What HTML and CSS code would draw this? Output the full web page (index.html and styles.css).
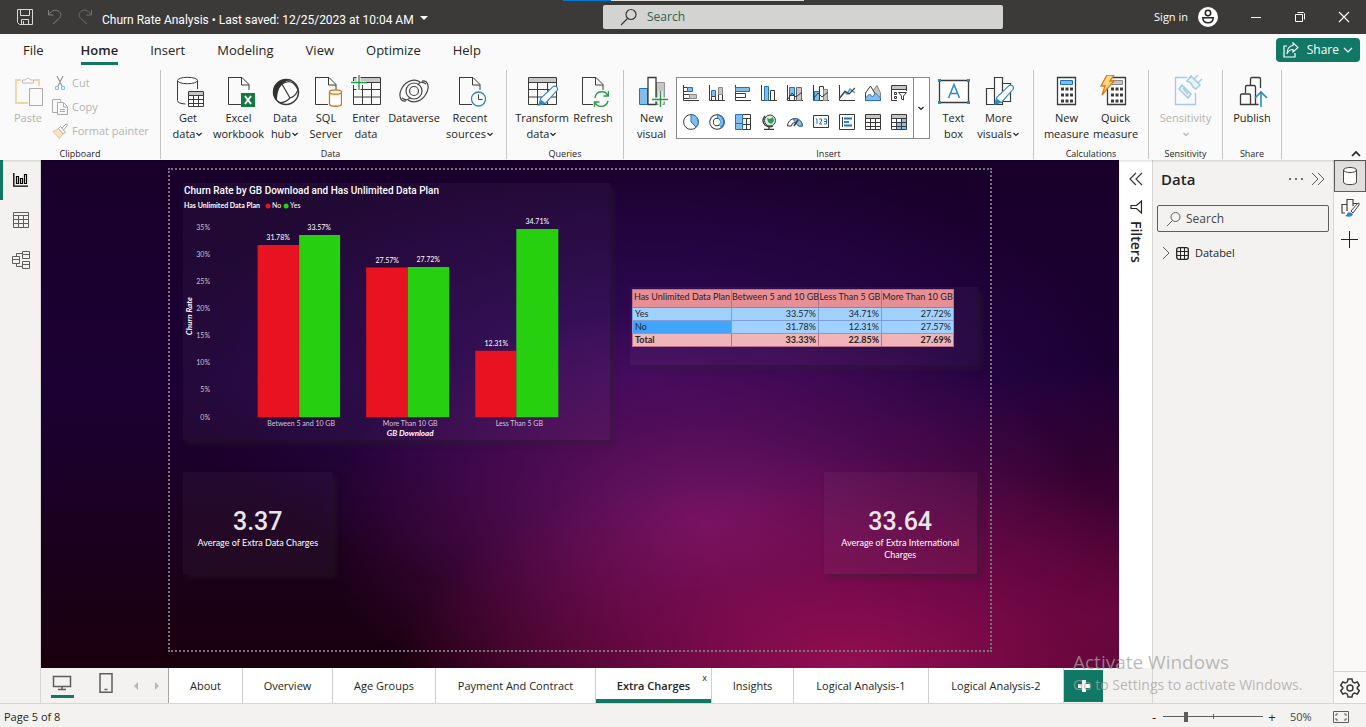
FILE: index.html
```html
<!DOCTYPE html>
<html lang="en">
<head>
<meta charset="utf-8">
<title>Churn Rate Analysis</title>
<link rel="stylesheet" href="styles.css">
</head>
<body>
<svg class="defs" aria-hidden="true">
  <symbol id="chev" viewBox="0 0 8 8"><path d="M1.500 3L4 5.500 6.500 3" fill="none" stroke="currentColor" stroke-width="1.200"/></symbol>
  <symbol id="doc" viewBox="0 0 32 32"><path d="M5.500 2.500H19l7 7V15M5.500 2v27.500H18M18.500 3v7H26" fill="none" stroke="#3b3a39"/></symbol>
  <symbol id="pencil" viewBox="0 0 24 24"><path d="M3 21l2-7L18 1.500q2-1 3.500.5t.5 3.500L10 19z" fill="#fff" stroke="#2b88c8" stroke-width="1.200"/><path d="M3 21l2-6 5 4z" fill="#2b88c8"/></symbol>
</svg>

<header class="titlebar">
  <span class="progress"></span>
  <div class="quick">
    <button class="tb" aria-label="Save"><svg width="16" height="16"><path d="M.5.500h15v15h-13l-2-2zM3.500.500v6h9v-6M4.500 15.500v-5h7v5M6.500 12v3" fill="none" stroke="#d8d8d8"/></svg></button>
    <button class="tb" aria-label="Undo"><svg width="16" height="16"><path d="M1.500 1v5h5M1.500 6C5 1 9 0 12 2.500s2 5.500-.5 7.500L6 15" fill="none" stroke="#83817f"/></svg></button>
    <button class="tb" aria-label="Redo"><svg width="16" height="16"><path d="M14.500 1v5h-5M14.500 6C11 1 7 0 4 2.500s-2 5.500.5 7.500L10 15" fill="none" stroke="#706e6c"/></svg></button>
    <button class="file">Churn Rate Analysis • Last saved: 12/25/2023 at 10:04 AM <svg width="10" height="10"><path d="M1 1h8L5 5z" fill="#fff"/></svg></button>
  </div>
  <label class="topsearch"><svg width="18" height="18"><circle cx="11" cy="6.500" r="5" fill="none" stroke="#3b3a39" stroke-width="1.200"/><path d="M7.500 10.500L1 17" stroke="#3b3a39" stroke-width="1.200"/></svg><input type="search" placeholder="Search" aria-label="Search"></label>
  <div class="account">
    <button class="signin">Sign in <svg width="20" height="20"><circle cx="10" cy="10" r="10" fill="#fff"/><circle cx="10" cy="6" r="2.700" fill="none" stroke="#222" stroke-width="1.500"/><path d="M4.800 10.800h10.400c0 3-2 5-5.200 5s-5.200-2-5.200-5z" fill="none" stroke="#222" stroke-width="1.500"/></svg></button>
    <button class="win" aria-label="Minimize"><svg width="12" height="12"><path d="M1 6.500h10" stroke="#fff"/></svg></button>
    <button class="win" aria-label="Restore"><svg width="12" height="12"><path d="M1.500 3.500h7v7h-7zM3.500 1.500h6l1 1v6" fill="none" stroke="#fff"/></svg></button>
    <button class="win" aria-label="Close"><svg width="12" height="12"><path d="M1 1l10 10M11 1L1 11" stroke="#fff" stroke-width="1.200"/></svg></button>
  </div>
</header>

<nav class="menu">
  <button class="first">File</button><button class="on">Home</button><button>Insert</button><button>Modeling</button><button>View</button><button>Optimize</button><button>Help</button>
  <button class="share"><svg width="16" height="16"><path d="M4 4H1v11h11v-4" fill="none" stroke="#fff" stroke-width="1.200"/><path d="M10 1l5 4.500-5 4.500V7.500C7 7.500 5 9 4 12c0-5 2-8 6-8.500z" fill="none" stroke="#fff" stroke-width="1.100"/></svg>Share<svg width="10" height="10"><path d="M1 3l4 4 4-4" fill="none" stroke="#fff" stroke-width="1.200"/></svg></button>
</nav>

<section class="ribbon">
  <div class="group g-clip">
    <div class="tools">
      <button class="big off w-paste"><svg width="32" height="32"><path d="M9 5H4v23h12M22 5h5v6" fill="none" stroke="#f3d3a3" stroke-width="1.800"/><path d="M10.500 8V5h3q2-4 5 0h3v3z" fill="#fff" stroke="#b8b8b8"/><path d="M17.500 13.500h13v17h-13z" fill="#fafafa" stroke="#aaa"/></svg><span>Paste</span></button>
      <div class="stack">
        <button class="row off"><svg width="16" height="16"><path d="M5 1l5 10M11 1L6 11" stroke="#999" fill="none" stroke-width="1.200"/><path d="M3.500 11.500h3v3h-3zM9.500 11.500h3v3h-3z" fill="#e6f2fa" stroke="#8fc0e0"/></svg>Cut</button>
        <button class="row off"><svg width="16" height="16"><path d="M5 13.500H.5V.500h8L9 4M5.500 3.500h6l4 4v8h-10zM11.500 4v4h4M8 10.500h5M8 12.500h5" fill="none" stroke="#aaa"/></svg>Copy</button>
        <button class="row off"><svg width="16" height="16"><path d="M1 8.500l6-3 4 5-3.500 5z" fill="#fbe3c6" stroke="#eec08c"/><path d="M6.500 5.500l2-2 5 6-2.500 1.500zM10 5l4-4q2 0 1 2l-3.500 4" fill="#fff" stroke="#aaa"/></svg>Format painter</button>
      </div>
    </div>
    <h2>Clipboard</h2>
  </div>

  <div class="group g-data">
    <div class="tools">
      <button class="big w48"><svg width="32" height="32"><path d="M5.500 5.500v20q0 3 8 3.500M25.500 5.500V14" fill="none" stroke="#3b3a39"/><ellipse cx="15.500" cy="5.500" rx="10" ry="3.200" fill="#fff" stroke="#3b3a39"/><path d="M16.500 16.500h15v15h-15z" fill="#fff" stroke="#3b3a39"/><path d="M17 17h14v3H17z" fill="#c8c6c4"/><path d="M16.500 20.500h15M16.500 24.500h15M16.500 28.500h15M21.500 20v12M26.500 20v12" stroke="#3b3a39"/></svg><span>Get<br>data<svg class="cv"><use href="#chev"/></svg></span></button>
      <button class="big w53"><svg width="32" height="32"><use href="#doc" width="32" height="32"/><path d="M18 18h14v14H18z" fill="#107c41"/><path d="M22 21l6 8M28 21l-6 8" stroke="#fff" stroke-width="2"/></svg><span>Excel<br>workbook</span></button>
      <button class="big w40"><svg width="32" height="32"><circle cx="17" cy="17" r="12.500" fill="#fff" stroke="#3b3a39" stroke-width="1.500"/><path d="M8 26C2 20 4 9 11 6q6-3 12-1-6 0-9 4c-4 3-6 8-6 17z" fill="#323130"/><path d="M13 9l8 14q5-1 8-8M9 27q6 2 12-4M13 9q10-7 16 6" fill="none" stroke="#3b3a39" stroke-width="1.200"/></svg><span>Data<br>hub<svg class="cv"><use href="#chev"/></svg></span></button>
      <button class="big w42"><svg width="32" height="32"><use href="#doc" width="32" height="32"/><path d="M19.500 17v12c0 3 12 3 12 0V17" fill="#fff" stroke="#d8700c" stroke-width="1.300"/><ellipse cx="25.500" cy="17" rx="6" ry="2.200" fill="#fff" stroke="#d8700c" stroke-width="1.300"/></svg><span>SQL<br>Server</span></button>
      <button class="big w38"><svg width="32" height="32"><path d="M4 3h26v4H4z" fill="#c8c6c4"/><path d="M3.500 2.500h27v27h-27zM3.500 7.500h27M3.500 14.500h27M3.500 22h27M12.500 7v22M21.500 7v22" fill="none" stroke="#3b3a39"/><path d="M1 8h15M8.500 0v16" stroke="#fafafa" stroke-width="4"/><path d="M1 7.500h16M9 0v15" stroke="#1f9a45" stroke-width="1.300"/></svg><span>Enter<br>data</span></button>
      <button class="big w58"><svg width="32" height="32"><g fill="none" stroke="#444" stroke-width="1.200"><circle cx="16" cy="16" r="4.500"/><circle cx="16" cy="16" r="8"/><path d="M8 26C2 27 0 20 4 13 8 6 16 3 22 7M24 6c6-1 8 6 4 13-4 7-12 10-18 6M4 23q6 4 8-1M28 9q-6-4-8 1"/></g></svg><span>Dataverse</span></button>
      <button class="big w54"><svg width="32" height="32"><use href="#doc" width="32" height="32"/><circle cx="24.500" cy="24" r="7" fill="#fff" stroke="#2b88c8" stroke-width="1.300"/><path d="M24.500 19.500V24.500h4" fill="none" stroke="#3b3a39"/></svg><span>Recent<br>sources<svg class="cv"><use href="#chev"/></svg></span></button>
    </div>
    <h2>Data</h2>
  </div>

  <div class="group g-query">
    <div class="tools">
      <button class="big w56"><svg width="32" height="32"><path d="M3 3h27v4H3z" fill="#c8c6c4"/><path d="M2.500 2.500h28v27h-28zM2.500 7.500h28M2.500 14.500h28M2.500 22h28M11.500 7v22M21.500 7v22" fill="none" stroke="#3b3a39"/><use href="#pencil" x="10" y="10" width="23" height="23"/></svg><span>Transform<br>data<svg class="cv"><use href="#chev"/></svg></span></button>
      <button class="big w46"><svg width="32" height="32"><use href="#doc" width="32" height="32"/><path d="M16 17h16v15H16z" fill="#fafafa"/><g fill="none" stroke="#2f9a4c" stroke-width="1.400"><path d="M18 23c1-8 11-8 13-2M31.500 16v5h-5M31 26c-2 7-11 7-13 1M17.500 32v-5h5"/></g></svg><span>Refresh</span></button>
    </div>
    <h2>Queries</h2>
  </div>

  <div class="group g-insert">
    <div class="tools">
      <button class="big w48"><svg width="32" height="32"><path d="M3.500 13.500h8v16h-8z" fill="#83bdec" stroke="#2272b9"/><path d="M20.500 7.500h8v22h-8z" fill="#c8c6c4" stroke="#979593"/><path d="M12 2.500h8v27h-8z" fill="#fff" stroke="#3b3a39" stroke-width="1.300"/><path d="M16 24.500h16M24.500 16v16" stroke="#fafafa" stroke-width="4"/><path d="M16 24.500h16M24.500 16v16" stroke="#1f9a45" stroke-width="1.400"/></svg><span>New<br>visual</span></button>
      <div class="gallery">
        <div class="cells">
          <button aria-label="Stacked bar chart"><svg width="16" height="16"><path d="M.5 0v15.500H16" fill="none" stroke="#3b3a39"/><path d="M.5 2.500h4v4h-4z" fill="#fff" stroke="#3b3a39"/><path d="M4.500 2.500h5v4h-5z" fill="#83bdec" stroke="#2272b9"/><path d="M.5 9.500h6v4h-6z" fill="#fff" stroke="#3b3a39"/><path d="M6.500 9.500h7v4h-7z" fill="#c8c6c4" stroke="#8a8886"/></svg></button>
          <button aria-label="Stacked column chart"><svg width="16" height="16"><path d="M.5 0v15.500H16" fill="none" stroke="#3b3a39"/><path d="M2.500 5.500h4v6h-4z" fill="#83bdec" stroke="#2272b9"/><path d="M2.500 11.500h4v4h-4zM9.500 9.500h4v6h-4z" fill="#fff" stroke="#3b3a39"/><path d="M9.500 2.500h4v7h-4z" fill="#c8c6c4" stroke="#8a8886"/></svg></button>
          <button aria-label="Clustered bar chart"><svg width="16" height="16"><path d="M.5 0v15.500H16" fill="none" stroke="#3b3a39"/><path d="M.5 2.500h14v4H.5z" fill="#83bdec" stroke="#2272b9"/><path d="M.5 8.500h10v4H.5z" fill="#fff" stroke="#3b3a39"/></svg></button>
          <button aria-label="Clustered column chart"><svg width="16" height="16"><path d="M.5 0v15.500H16" fill="none" stroke="#3b3a39"/><path d="M3.500 1.500h4v14h-4z" fill="#83bdec" stroke="#2272b9"/><path d="M9.500 5.500h4v10h-4z" fill="#fff" stroke="#3b3a39"/></svg></button>
          <button aria-label="Line and stacked column chart"><svg width="16" height="16"><path d="M.5 0v15.500H16" fill="none" stroke="#3b3a39"/><path d="M2.500 2.500h5v8h-5z" fill="#83bdec" stroke="#2272b9"/><path d="M9.500 2.500h5v13h-5z" fill="#c8c6c4" stroke="#666"/><path d="M2.500 10.500h5v5h-5zM1 14l4-6 4 4 6-5" fill="none" stroke="#3b3a39"/></svg></button>
          <button aria-label="Line and clustered column chart"><svg width="16" height="16"><path d="M.5 0v15.500H16" fill="none" stroke="#3b3a39"/><path d="M1.500 6.500h5v9h-5z" fill="#83bdec" stroke="#2272b9"/><path d="M6.500 1.500h4v14h-4z" fill="#fff" stroke="#3b3a39"/><path d="M10.500 4.500h4v11h-4z" fill="#c8c6c4" stroke="#8a8886"/><path d="M1 13l4-5 4 4 6-5" fill="none" stroke="#3b3a39"/></svg></button>
          <button aria-label="Line chart"><svg width="16" height="16"><path d="M.5 0v15.500H16" fill="none" stroke="#3b3a39"/><path d="M1 12l5-5 2 2 3-5 5 4" fill="none" stroke="#4a9cdf" stroke-width="1.500"/><path d="M1 13l5-7 4 3 6-6" fill="none" stroke="#3b3a39" stroke-width="1.200"/></svg></button>
          <button aria-label="Area chart"><svg width="16" height="16"><path d="M8 15V6l4-5.500L15.500 8v7.500z" fill="#c8c6c4" stroke="#8a8886"/><path d="M.5 15.500V8l5-7 6 10v4.500z" fill="#fff" stroke="#3b3a39"/><path d="M.5 15.500V13l4-4 3 3 3-4 5 5v2.500z" fill="#83bdec" stroke="#2272b9"/></svg></button>
          <button aria-label="Slicer"><svg width="16" height="16"><path d="M1 1h14v3H1z" fill="#c8c6c4"/><path d="M6 15.500H.5V.500h15V6M.5 4.500h15M3.500 7.500h2v2h-2zM3.500 11.500h2v2h-2zM7.500 7.500h8l-3 3.500v4l-2-1v-3z" fill="none" stroke="#3b3a39"/></svg></button>
          <button aria-label="Pie chart"><svg width="16" height="16"><circle cx="8" cy="8" r="7.400" fill="#fff" stroke="#3b3a39"/><path d="M8 8V.600a7.400 7.400 0 0 1 5.200 12.600z" fill="#83bdec" stroke="#2272b9"/></svg></button>
          <button aria-label="Donut chart"><svg width="16" height="16"><circle cx="8" cy="8" r="5.500" fill="none" stroke="#3b3a39" stroke-width="4.500"/><circle cx="8" cy="8" r="5.500" fill="none" stroke="#fff" stroke-width="2.600"/><path d="M8 2.500a5.500 5.500 0 0 1 3 10" fill="none" stroke="#2272b9" stroke-width="4.500"/><path d="M8.500 2.500a5.500 5.500 0 0 1 2.500 9.500" fill="none" stroke="#83bdec" stroke-width="2.600"/></svg></button>
          <button aria-label="Treemap"><svg width="16" height="16"><path d="M7.500.500h8v15h-8zM7.500 4.500h8M7.500 10.500h8M11.500 4.500v11" fill="#fff" stroke="#3b3a39"/><path d="M.5.500h7v15h-7zM.5 9.500h7" fill="#83bdec" stroke="#2272b9"/></svg></button>
          <button aria-label="Map"><svg width="16" height="16"><circle cx="9" cy="6.500" r="5.500" fill="#d5f0dc" stroke="#3b3a39"/><path d="M6 4l3 1 3-2 1 4-3 3-3-2z" fill="#2f9a4c"/><path d="M4 2q-4 5 0 9 4 3 8 1M8 13v2M3 15.500h10" fill="none" stroke="#3b3a39" stroke-width="1.300"/></svg></button>
          <button aria-label="Gauge"><svg width="16" height="16"><path d="M.5 12a7.500 7.500 0 0 1 15 0h-4a3.500 3.500 0 0 0-7 0z" fill="#fff" stroke="#3b3a39"/><path d="M6 5a7.500 7.500 0 0 1 9.500 7h-4l-3-3.500z" fill="#83bdec" stroke="#2272b9"/><path d="M7 12l4-6" stroke="#3b3a39" stroke-width="1.500"/></svg></button>
          <button aria-label="Card"><svg width="16" height="16"><path d="M.5 1.500h15v12H.5z" fill="#fff" stroke="#3b3a39"/><path d="M3 5h1v5M6 5h2.500v2L6.500 10H9M11 5h2.500v5H11M11 7.500h2" fill="none" stroke="#2272b9"/></svg></button>
          <button aria-label="Multi-row card"><svg width="16" height="16"><path d="M.5.500h15v15H.5zM3.500 3v10" fill="#fff" stroke="#3b3a39"/><path d="M5 4.500h8M5 11.500h8" stroke="#2272b9" stroke-width="2"/><path d="M5 8h5" stroke="#2b88c8" stroke-width="2"/></svg></button>
          <button aria-label="Table"><svg width="16" height="16"><path d="M1 1h14v3H1z" fill="#c8c6c4"/><path d="M.5.500h15v15H.5zM.5 4.500h15M.5 8.500h15M.5 12.500h15M5.500 4v12M10.500 4v12" fill="none" stroke="#3b3a39"/></svg></button>
          <button aria-label="Matrix"><svg width="16" height="16"><path d="M1 1h14v3H1z" fill="#c8c6c4"/><path d="M5.500 8.500h10v7h-10zM10.500 4.500h5v4h-5z" fill="#83bdec"/><path d="M.5.500h15v15H.5zM.5 4.500h15M.5 8.500h15M.5 12.500h15M5.500 4v12M10.500 4v12" fill="none" stroke="#3b3a39"/></svg></button>
        </div>
        <button class="more" aria-label="More visuals"><svg class="cv"><use href="#chev"/></svg></button>
      </div>
      <button class="big w48"><svg width="32" height="32"><path d="M1.500 5.500h29v22h-29z" fill="#fff" stroke="#3b3a39" stroke-width="1.300"/><path d="M0 4h3v3H0zM29 4h3v3h-3zM0 26h3v3H0zM29 26h3v3h-3z" fill="#2b88c8"/><path d="M10.500 23L16 9.500 21.500 23M12.500 18.500h7" fill="none" stroke="#2b88c8" stroke-width="1.500"/></svg><span>Text<br>box</span></button>
      <button class="big w42"><svg width="32" height="32"><path d="M3.500 13.500h8v16h-8zM11.500 2.500h8v27h-8zM19.500 8.500h8v18h-8z" fill="#fff" stroke="#3b3a39" stroke-width="1.200"/><use href="#pencil" x="9" y="9" width="23" height="23"/></svg><span>More<br>visuals<svg class="cv"><use href="#chev"/></svg></span></button>
    </div>
    <h2>Insert</h2>
  </div>

  <div class="group g-calc">
    <div class="tools">
      <button class="big w49"><svg width="32" height="32"><path d="M6.500 2.500h18v27h-18z" fill="#fff" stroke="#3b3a39" stroke-width="1.300"/><path d="M9.500 5.500h12v4h-12z" fill="#83bdec" stroke="#2272b9"/><path d="M10 14h12M10 20h12M10 26h12" stroke="#3b3a39" stroke-width="3" stroke-dasharray="3 1.500"/></svg><span>New<br>measure</span></button>
      <button class="big w49"><svg width="32" height="32"><path d="M7.500 2.500h18v27h-18z" fill="#fff" stroke="#3b3a39" stroke-width="1.300"/><path d="M11.500 5.500h11v4h-11z" fill="#c8c6c4" stroke="#8a8886"/><path d="M11 14h12M11 20h12M11 26h12" stroke="#3b3a39" stroke-width="3" stroke-dasharray="3 1.500"/><path d="M7 0h7l-4 6h4L2 20l3-9H1z" fill="#fcd58a" stroke="#df7a12" stroke-width="1.300"/></svg><span>Quick<br>measure</span></button>
    </div>
    <h2>Calculations</h2>
  </div>

  <div class="group g-sens">
    <div class="tools">
      <button class="big off w58"><svg width="32" height="32"><path d="M17 2.500H5.500v27h20V18" fill="none" stroke="#a3cbe5" stroke-width="1.300"/><path d="M12 10l9 9-3 4-9-9zM13 13l5 6M17 6l4-5 9 9-4 4q-3-1-4-4t-5-4zM24 4l4-4M28 8l4-4" fill="#eaf4fa" stroke="#a3cbe5" stroke-width="1.500"/></svg><span>Sensitivity<br><svg class="cv"><use href="#chev"/></svg></span></button>
    </div>
    <h2>Sensitivity</h2>
  </div>

  <div class="group g-share">
    <div class="tools">
      <button class="big w46"><svg width="32" height="32"><path d="M14.500 10V4q0-1.500 1.500-1.500h7q1.500 0 1.500 1.500v9M9.500 18v-6q0-1.500 1.500-1.500h7q1.500 0 1.500 1.500v17.500M4.500 29.500v-9q0-1.500 1.500-1.500h7q1.500 0 1.500 1.500v9zM14.500 29.500h8" fill="none" stroke="#3b3a39" stroke-width="1.300"/><path d="M25 32V17M19 23l6-6 6 6" fill="none" stroke="#2b88c8" stroke-width="1.600"/></svg><span>Publish</span></button>
    </div>
    <h2>Share</h2>
  </div>
  <button class="collapse" aria-label="Collapse ribbon"><svg width="10" height="10"><path d="M1 7l4-4 4 4" fill="none" stroke="#222" stroke-width="1.700"/></svg></button>
</section>

<main class="main">
  <nav class="views">
    <button class="on" aria-label="Report view"><svg width="16" height="16"><path d="M.8 1v13.200H15" fill="none" stroke="#000" stroke-width="1.300"/><path d="M3.500 4.500h2v7h-2zM7.500 6.500h2v5h-2zM11.500 2.500h2v9h-2z" fill="none" stroke="#000" stroke-width="1.200"/></svg></button>
    <button aria-label="Table view"><svg width="16" height="16"><path d="M.5.500h15v15H.5zM.5 3.500h15M.5 7.500h15M.5 11.500h15M5.500 3v12M10.500 3v12" fill="none" stroke="#605e5c"/></svg></button>
    <button aria-label="Model view"><svg width="18" height="18"><path d="M.5 5.500h7v7h-7zM.5 8.500h7M10.500.500h7v7h-7zM10.500 3.500h7M10.500 10.500h7v7h-7zM10.500 13.500h7M4.500 5.500v-3h6M4.500 12.500v3h6" fill="none" stroke="#605e5c"/></svg></button>
  </nav>

  <div class="work">
    <div class="desk">
      <div class="canvas">
        <div class="page">
          <article class="visual v-chart">
            <svg viewBox="0 0 426 257" role="img" aria-label="Churn Rate by GB Download and Has Unlimited Data Plan">
              <text class="c-title" x="1" y="11">Churn Rate by GB Download and Has Unlimited Data Plan</text>
              <text class="c-leg" x="1" y="25">Has Unlimited Data Plan</text>
              <circle cx="85" cy="23" r="2.500" fill="#e81220"/><text class="c-sm" x="89" y="25">No</text>
              <circle cx="103" cy="23" r="2.500" fill="#26d00e"/><text class="c-sm" x="107" y="25">Yes</text>
              <g class="c-tick"><text x="27" y="47">35%</text><text x="27" y="74">30%</text><text x="27" y="101">25%</text><text x="27" y="128">20%</text><text x="27" y="155">15%</text><text x="27" y="182">10%</text><text x="27" y="209">5%</text><text x="27" y="237">0%</text></g>
              <text class="c-axis" transform="translate(9 133) rotate(-90)">Churn Rate</text>
              <g fill="#e81220"><path d="M74.500 62H116v172H74.500zM183 84.500h41.500V234H183zM292 167.500h41V234h-41z"/></g>
              <g fill="#26d00e"><path d="M116 52h41v182h-41zM224.500 84h41.500v150h-41.500zM333 46h42v188h-42z"/></g>
              <g class="c-val"><text x="95" y="57">31.78%</text><text x="136" y="47">33.57%</text><text x="204" y="80">27.57%</text><text x="245" y="79">27.72%</text><text x="313" y="163">12.31%</text><text x="354" y="41">34.71%</text></g>
              <g class="c-cat"><text x="118" y="243">Between 5 and 10 GB</text><text x="227" y="243">More Than 10 GB</text><text x="336" y="243">Less Than 5 GB</text></g>
              <text class="c-axis" x="227" y="253">GB Download</text>
            </svg>
          </article>
          <article class="visual v-table">
            <table>
              <thead><tr><th>Has Unlimited Data Plan</th><th>Between 5 and 10 GB</th><th>Less Than 5 GB</th><th>More Than 10 GB</th></tr></thead>
              <tbody><tr><td>Yes</td><td>33.57%</td><td>34.71%</td><td>27.72%</td></tr><tr class="alt"><td>No</td><td>31.78%</td><td>12.31%</td><td>27.57%</td></tr></tbody>
              <tfoot><tr><td>Total</td><td>33.33%</td><td>22.85%</td><td>27.69%</td></tr></tfoot>
            </table>
          </article>
          <article class="visual kpi k-data"><strong>3.37</strong><span>Average of Extra Data Charges</span></article>
          <article class="visual kpi k-intl"><strong>33.64</strong><span>Average of Extra International Charges</span></article>
        </div>
      </div>
      <aside class="filters">
        <button aria-label="Expand filters"><svg width="14" height="14"><path d="M7 1L1 7l6 6M13 1L7 7l6 6" fill="none" stroke="#3b3a39" stroke-width="1.200"/></svg></button>
        <svg width="14" height="14"><path d="M12.500 1v12L7.500 8.500 2 8.500V5.500h5.500z" fill="none" stroke="#252423" stroke-width="1.200"/></svg>
        <span>Filters</span>
      </aside>
    </div>
    <div class="pages">
      <div class="layouts">
        <button class="on" aria-label="Desktop layout"><svg width="20" height="16"><path d="M1.500 1.500h17v10h-17zM6 14.500h8M10 12v2" fill="none" stroke="#605e5c" stroke-width="1.500"/></svg></button>
        <button aria-label="Mobile layout"><svg width="14" height="20"><path d="M1 .800h12v18.400H1zM5.500 16.500h3" fill="none" stroke="#605e5c" stroke-width="1.500"/></svg></button>
        <button class="step-page" aria-label="Previous pages"><svg width="6" height="8"><path d="M5 0v8L1 4z" fill="#b8b6b4"/></svg></button>
        <button class="step-page" aria-label="Next pages"><svg width="6" height="8"><path d="M1 0v8l4-4z" fill="#b8b6b4"/></svg></button>
      </div>
      <div class="tabs">
        <button>About</button><button>Overview</button><button>Age Groups</button><button>Payment And Contract</button><button class="on">Extra Charges<i>x</i></button><button>Insights</button><button>Logical Analysis-1</button><button>Logical Analysis-2</button>
        <button class="add" aria-label="New page"><svg width="12" height="12"><path d="M6 0v12M0 6h12" stroke="#fff" stroke-width="4"/></svg></button>
      </div>
    </div>
  </div>

  <aside class="data">
    <header><h1>Data</h1><button aria-label="More options"><svg width="16" height="4"><circle cx="2" cy="2" r="1" fill="#444"/><circle cx="8" cy="2" r="1" fill="#444"/><circle cx="14" cy="2" r="1" fill="#444"/></svg></button><button aria-label="Collapse"><svg width="14" height="14"><path d="M1 1l6 6-6 6M7 1l6 6-6 6" fill="none" stroke="#605e5c"/></svg></button></header>
    <label><svg width="16" height="16"><circle cx="9.500" cy="6" r="4.500" fill="none" stroke="#605e5c"/><path d="M6.500 9.500L1 15" stroke="#605e5c"/></svg><input type="search" placeholder="Search" aria-label="Search fields"></label>
    <button class="node"><svg width="8" height="14"><path d="M1 1l6 6-6 6" fill="none" stroke="#605e5c"/></svg><svg width="13" height="13"><rect x=".7" y=".7" width="11.600" height="11.600" rx="2" fill="none" stroke="#252423" stroke-width="1.300"/><path d="M4.500 1v11M8.500 1v11M1 4.500h11M1 8.500h11" stroke="#252423"/></svg>Databel</button>
  </aside>

  <nav class="rail">
    <button class="on" aria-label="Data"><svg width="16" height="20"><path d="M1.500 4v12c0 3.500 13 3.500 13 0V4" fill="#fff" stroke="#444"/><ellipse cx="8" cy="4" rx="6.500" ry="2.500" fill="#fff" stroke="#444"/></svg></button>
    <button aria-label="Format"><svg width="20" height="20"><path d="M5 15H2V6.500h5V13M7 6.500v-5h6V8M13 5.500h4" fill="none" stroke="#444" stroke-width="1.200"/><path d="M18 5q2 0 1 2l-6 8-2-2z" fill="#fff" stroke="#444"/><path d="M5 18q2-1 2.500-3 2.500-2 5.500 1-1 4-8 2z" fill="#2b88c8"/></svg></button>
    <button aria-label="Add"><svg width="18" height="18"><path d="M8.500 0v17M0 8.500h17" stroke="#222"/></svg></button>
    <button class="gear" aria-label="Settings"><svg width="20" height="20"><path d="M8 1h4l.6 2.800 2 1.100L17.300 4l2 3.400-2 2v1.200l2 2-2 3.400-2.700-.9-2 1.100L12 19H8l-.6-2.800-2-1.100-2.700.9-2-3.400 2-2V9.400l-2-2 2-3.400 2.700.9 2-1.100z" fill="none" stroke="#3b3a39" stroke-width="1.500"/><circle cx="10" cy="10" r="3" fill="none" stroke="#3b3a39" stroke-width="1.500"/></svg></button>
  </nav>
</main>

<footer class="status">
  <span>Page 5 of 8</span>
  <button class="step" aria-label="Zoom out">-</button>
  <input type="range" min="0" max="100" value="22" aria-label="Zoom">
  <button class="step" aria-label="Zoom in">+</button>
  <span class="pct">50%</span>
  <button class="fit" aria-label="Fit to page"><svg width="16" height="12"><path d="M.5.500h15v11H.5z" fill="none" stroke="#605e5c"/><path d="M3 5V3h2M11 3h2v2M3 7v2h2M11 9h2V7" fill="none" stroke="#605e5c"/></svg></button>
</footer>

<div class="watermark"><p>Activate Windows</p><span>Go to Settings to activate Windows.</span></div>
</body>
</html>
```

FILE: styles.css
```css
* { box-sizing: border-box; }
body {
  margin: 0;
  height: 100vh;
  display: flex;
  flex-direction: column;
  overflow: hidden;
  font: 11px/16px "Open Sans", "Noto Sans", sans-serif;
  color: #252423;
  background: #f3f2f1;
}
button {
  border: 0;
  padding: 0;
  background: none;
  font: inherit;
  color: inherit;
  white-space: nowrap;
}
input { font: inherit; color: inherit; border: 0; outline: 0; background: none; padding: 0; min-width: 0; }
h1, h2, p { margin: 0; font-weight: 400; }
svg { display: block; flex: none; }
.defs { position: absolute; width: 0; height: 0; }
.cv { display: inline-block; width: 8px; height: 8px; }

/* Title bar */
.titlebar {
  position: relative;
  display: grid;
  grid-template-columns: 603fr 400px 363fr;
  align-items: center;
  height: 34px;
  background: #3b3a39;
  color: #fff;
}
.progress {
  position: absolute;
  top: 0;
  left: 563px;
  width: 241px;
  height: 1px;
  background: linear-gradient(90deg, #0078d4 20%, #e1dfdd 20%);
}
.quick { display: flex; align-items: center; padding-left: 17px; gap: 14px; }
.file { display: flex; align-items: center; gap: 5px; height: 34px; margin-left: -5px; padding-top: 6px; font: 12px/16px Roboto, sans-serif; }
.topsearch {
  display: flex;
  align-items: center;
  gap: 9px;
  height: 24px;
  padding-left: 17px;
  border-radius: 2px;
  background: #d3d3d1;
}
.topsearch input { flex: 1; font-size: 12px; }
.topsearch input::placeholder { color: #2f5f55; opacity: 1; }
.account { display: flex; align-items: center; justify-content: flex-end; gap: 32px; padding-right: 16px; }
.signin { display: flex; align-items: center; gap: 10px; }

/* Menu */
.menu {
  display: flex;
  align-items: center;
  gap: 32px;
  height: 32px;
  padding: 0 6px 0 23px;
  background: #fafafa;
  font-size: 13px;
}
.menu button { height: 32px; }
.menu .first { margin-right: 5px; }
.menu .on { font-weight: 600; box-shadow: inset 0 -1px #fafafa, inset 0 -4px #117865; }
.menu .share {
  display: flex;
  align-items: center;
  gap: 8px;
  height: 24px;
  margin-left: auto;
  padding: 0 7px;
  border-radius: 4px;
  background: #117865;
  color: #fff;
  font-size: 12px;
}
.share svg:last-child { margin-left: -4px; }

/* Ribbon */
.ribbon {
  position: relative;
  z-index: 1;
  display: flex;
  height: 94px;
  padding: 4px 0 1px;
  background: #fafafa;
  box-shadow: 0 1px 2px rgba(0, 0, 0, .15);
}
.group {
  display: flex;
  flex-direction: column;
  justify-content: space-between;
  border-right: 1px solid #c8c6c4;
  flex: none;
}
.group h2 { font-size: 9px; line-height: 10px; text-align: center; }
.tools { display: flex; justify-content: center; }
.g-clip { width: 161px; }
.g-clip .tools { justify-content: flex-start; padding-left: 5px; }
.g-data { width: 346px; padding-right: 6px; }
.g-query { width: 117px; }
.g-insert { width: 410px; }
.g-insert .tools { padding-right: 10px; }
.g-calc { width: 115px; }
.g-sens { width: 74px; }
.g-share { width: 59px; }
.big {
  display: flex;
  flex-direction: column;
  align-items: center;
  justify-content: flex-start;
  gap: 3px;
  padding-top: 5px;
}
.big span { text-align: center; }
.off { color: #b5b3b1; }
.w-paste { width: 46px; }
.w38 { width: 38px; }
.w40 { width: 40px; }
.w42 { width: 42px; }
.w46 { width: 46px; }
.w48 { width: 48px; }
.w49 { width: 49px; }
.w53 { width: 53px; }
.w54 { width: 54px; }
.w56 { width: 56px; }
.w58 { width: 58px; }
.w38, .w40, .w42, .w46, .w48, .w49, .w53, .w54, .w56, .w58 { flex: none; }
.stack { display: flex; flex-direction: column; gap: 8px; padding: 5px 0 0 1px; }
.row { display: flex; align-items: center; gap: 4px; }
.gallery {
  display: flex;
  height: 62px;
  margin-top: 7px;
  border: 1px solid #8a8886;
  background: #fff;
}
.cells {
  display: grid;
  grid-template-columns: repeat(9, 26px);
  grid-template-rows: 29px 29px;
  align-content: start;
  width: 236px;
  padding-left: 1px;
}
.cells button, .more { display: flex; align-items: center; justify-content: center; }
.more { width: 16px; border-left: 1px solid #8a8886; }
.collapse { margin: auto 5px 0 auto; }

/* Main area */
.main { flex: 1; display: flex; min-height: 0; }
.views { width: 41px; border-right: 1px solid #d8d6d4; display: flex; flex-direction: column; }
.views button { display: flex; align-items: center; justify-content: center; height: 40px; padding-left: 2px; }
.views .on { box-shadow: inset 3px 0 #117865; }
.work { flex: 1; display: flex; flex-direction: column; min-width: 0; }
.desk { flex: 1; display: flex; min-height: 0; }
.canvas {
  flex: 1;
  display: flex;
  padding: 8px 127px 16px;
  background:
    radial-gradient(ellipse 42% 42% at 75% 100%, rgba(152, 14, 84, .95), rgba(140, 10, 80, .5) 50%, transparent),
    radial-gradient(ellipse 36% 44% at 62% 72%, rgba(122, 24, 108, .9), rgba(110, 15, 95, .45) 55%, transparent),
    radial-gradient(ellipse 42% 50% at 100% 90%, rgba(110, 5, 70, .7), transparent),
    radial-gradient(ellipse 44% 45% at 56% 42%, rgba(62, 14, 110, .7), transparent),
    linear-gradient(180deg, #18002a, #1c0034 45%, #1a000c);
}
.page { position: relative; flex: 1; border: 2px dotted #77727a; }
.visual {
  position: absolute;
  background: rgba(255, 255, 255, .035);
  box-shadow: 4px 4px 5px rgba(40, 35, 40, .4);
  color: #fff;
  font-family: Lato, sans-serif;
}
.v-chart { left: 1.6%; top: 2.7%; width: 52%; height: 53.6%; }
.v-chart svg { width: 100%; height: 100%; }
.v-table { left: 56.1%; top: 24.4%; width: 42.4%; height: 16.3%; padding: 2px; }
.kpi {
  top: 63%;
  height: 21.1%;
  padding: 35px 12px 0;
  display: flex;
  flex-direction: column;
  align-items: center;
  justify-content: flex-start;
  text-align: center;
  font-size: 9px;
  line-height: 12px;
}
.k-data { left: 1.6%; width: 18.2%; }
.k-intl { left: 79.7%; width: 18.7%; }
.kpi strong { font-family: Roboto, sans-serif; font-weight: 500; font-size: 25px; line-height: 30px; color: #e8e6e8; }

text { fill: #fff; font-size: 7px; }
.c-title { font-family: Roboto, sans-serif; font-size: 10px; font-weight: 500; }
.c-leg { font-weight: 700; }
.c-tick { text-anchor: end; }
.c-tick text { fill: #c8c2d0; }
.c-val { text-anchor: middle; }
.c-cat { text-anchor: middle; }
.c-cat text { fill: #d0c8d6; }
.c-axis { font-size: 8px; font-weight: 700; font-style: italic; text-anchor: middle; }

table {
  width: 322px;
  table-layout: fixed;
  border-collapse: collapse;
  font-size: 9px;
  line-height: 12px;
  color: #252423;
  border: 1px solid #b0708c;
}
th, td { padding: 0 2px; border: 1px solid #7d9fd6; text-align: right; white-space: nowrap; }
th { height: 18px; padding: 0 0 4px; background: #e88f96; border-color: #b8708c; font-weight: 400; text-align: center; }
th:nth-child(1) { width: 99px; }
th:nth-child(2) { width: 87px; }
th:nth-child(3) { width: 63px; }
td { background: #a0d1ff; }
td:first-child { text-align: left; }
.alt td:first-child { background: #41a4ff; }
tfoot td { background: #f0b4b9; border-color: #b8708c; border-top: 0; font-weight: 700; }

.filters {
  width: 34px;
  display: flex;
  flex-direction: column;
  align-items: center;
  gap: 14px;
  padding-top: 12px;
  background: #fff;
  border-right: 1px solid #d8d6d4;
}
.filters span { writing-mode: vertical-rl; font-size: 14px; font-weight: 600; margin-top: -7px; }

/* Page tabs */
.pages { display: flex; height: 35px; border-right: 1px solid #d8d6d4; }
.layouts { display: flex; width: 128px; border-right: 1px solid #a6a4a2; padding-left: 10px; }
.layouts button { display: flex; align-items: center; justify-content: center; width: 22px; height: 30px; }
.layouts button:first-child { width: 24px; }
.layouts button:nth-child(2) { margin: 0 9px 0 22px; }
.layouts .step-page { height: 35px; }
.layouts .on { box-shadow: inset 0 -3px #117865; }
.tabs { display: grid; grid-template-columns: 74px 90px 103px 160px 116px 82px 135px 135px 39px; }
.tabs button { position: relative; background: #fff; border-right: 1px solid #d0cecc; }
.tabs .on { font-weight: 600; box-shadow: inset 0 -4px #117865; }
.tabs i { position: absolute; top: 2px; right: 4px; font-style: normal; font-weight: 400; font-size: 9px; }
.tabs .add { display: flex; align-items: center; justify-content: center; height: 32px; margin-top: 2px; background: #117865; border: 0; }

/* Data pane */
.data { width: 181px; padding: 0 4px; border-right: 1px solid #d8d6d4; }
.data header { display: flex; align-items: center; gap: 7px; height: 38px; padding: 0 4px; }
.data h1 { flex: 1; font-size: 15px; font-weight: 600; }
.data label { display: flex; align-items: center; gap: 4px; height: 27px; margin-top: 7px; padding-left: 8px; border: 1px solid #605e5c; border-radius: 2px; }
.data input { flex: 1; font-size: 12px; }
.data input::placeholder { color: #484644; opacity: 1; }
.node { display: flex; align-items: center; gap: 6px; margin-top: 13px; padding-left: 5px; }

.rail { width: 32px; display: flex; flex-direction: column; background: #faf9f8; }
.rail button { display: flex; align-items: center; justify-content: center; height: 32px; }
.rail .on { background: #e1dfdd; border: 1px solid #605e5c; }
.rail .gear { margin-top: auto; border-top: 1px solid #d8d6d4; }

/* Status bar */
.status {
  display: flex;
  align-items: center;
  height: 24px;
  padding: 2px 17px 0 4px;
  border-top: 1px solid #d8d6d4;
}
.step { width: 10px; font-size: 13px; text-align: center; }
.status > button:first-of-type { margin-left: auto; }
.status input {
  appearance: none;
  width: 100px;
  height: 10px;
  margin: 0 4px;
  background:
    linear-gradient(#605e5c, #605e5c) 50% 50% / 1px 5px no-repeat,
    linear-gradient(#605e5c, #605e5c) 50% 50% / 100% 1px no-repeat;
}
.status input::-webkit-slider-thumb { appearance: none; width: 4px; height: 10px; background: #605e5c; }
.pct { width: 24px; margin: 0 19px 0 13px; color: #484644; }

.watermark {
  position: absolute;
  z-index: 2;
  right: 57px;
  bottom: 32px;
  width: 236px;
  color: rgba(165, 163, 161, .75);
  font-size: 14px;
  line-height: 20px;
  white-space: nowrap;
  pointer-events: none;
}
.watermark p { font-size: 19px; line-height: 26px; }
```
